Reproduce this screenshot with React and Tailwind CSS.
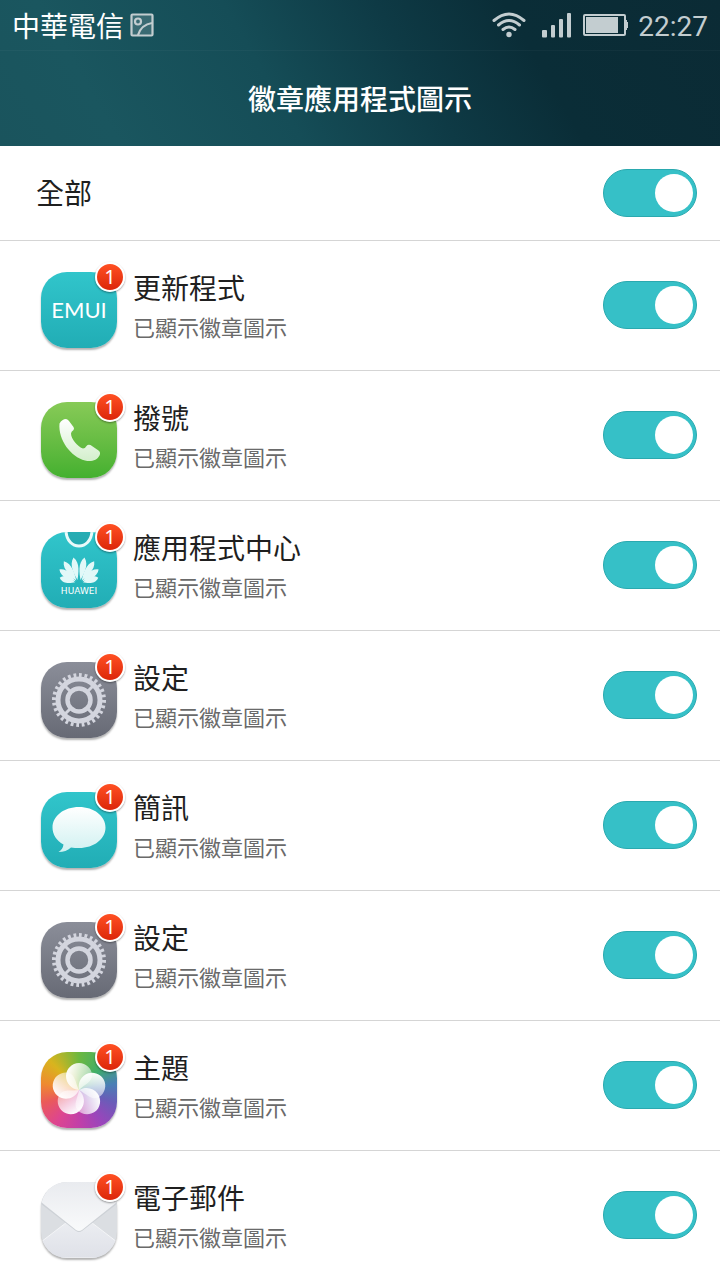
import React, { useState } from 'react'

const SUBTITLE = '已顯示徽章圖示'

function EmuiIcon() {
  return (
    <svg viewBox="0 0 76 76" className="w-full h-full">
      <text
        x="38"
        y="46"
        textAnchor="middle"
        fill="#fff"
        className="text-[22px] font-[Lato,sans-serif]"
      >
        EMUI
      </text>
    </svg>
  )
}

function PhoneIcon() {
  return (
    <svg viewBox="0 0 76 76" className="w-full h-full">
      <defs>
        <linearGradient id="phone" x1="0" y1="0" x2="0" y2="1">
          <stop offset="0" stopColor="#fff" />
          <stop offset="1" stopColor="#d3efcc" />
        </linearGradient>
      </defs>
      <path
        d="M18.5 21.5Q21 17 25 17Q27 17.500 28 19L32.500 25Q33.500 26.500 32.500 28Q30 29.500 30 31.500C30 37 37 45 42 46.500Q44 46.500 45.500 44Q47 42 49.500 43L57.500 48.500Q60 50.500 58.500 53.500C56 58.500 50 60 44 58.500C30 55 17 38 18.500 21.500Z"
        fill="url(#phone)"
      />
    </svg>
  )
}

const HUAWEI_PETALS = [
  { angle: 10, length: 26 },
  { angle: 33, length: 26 },
  { angle: 54, length: 23 },
  { angle: 74, length: 19 },
]

function StoreIcon() {
  return (
    <svg viewBox="0 0 76 76" className="w-full h-full">
      <path d="M25 0C26 20 50 20 51 0Z" fill="#1c939c" opacity="0.5" />
      <path d="M25 -1C26 19 50 19 51 -1" fill="none" stroke="#e9fafa" strokeWidth="3" />
      <g fill="#e2f8f8">
        {HUAWEI_PETALS.flatMap(({ angle, length }) =>
          [-1, 1].map((side) => (
            <path
              key={angle * side}
              d={`M0 -3C-2 ${-length * 0.35} -6 ${-length * 0.75} 0 ${-length}C6 ${-length * 0.75} 2 ${-length * 0.35} 0 -3Z`}
              transform={`translate(${38 + side} 51) rotate(${angle * side})`}
            />
          ))
        )}
      </g>
      <text
        x="38"
        y="62"
        textAnchor="middle"
        fill="#fff"
        className="text-[9px] font-['DejaVu_Sans',sans-serif]"
      >
        HUAWEI
      </text>
    </svg>
  )
}

function GearIcon() {
  return (
    <svg viewBox="0 0 76 76" className="w-full h-full">
      <g fill="none" stroke="#d3d5de">
        <circle cx="38" cy="38" r="25" strokeWidth="4" pathLength="56" strokeDasharray="1 1" />
        <circle cx="38" cy="38" r="21" strokeWidth="5" />
        <circle cx="38" cy="38" r="11.5" strokeWidth="4.500" />
        <path d="M24 24L30 30M52 24L46 30M24 52L30 46M52 52L46 46" strokeWidth="3" />
      </g>
    </svg>
  )
}

function MessageIcon() {
  return (
    <svg viewBox="0 0 76 76" className="w-full h-full">
      <defs>
        <linearGradient id="bubble" x1="0" y1="0" x2="0" y2="1">
          <stop offset="0" stopColor="#fff" />
          <stop offset="1" stopColor="#d0f1f1" />
        </linearGradient>
      </defs>
      <path
        d="M38 15C53 15 64.500 24 64.500 35.500C64.500 47 53 56 38 56Q34 56 30 55.500Q25 60 17.500 60Q22 57 22.500 52.500C15.500 48.500 11.500 42.500 11.500 35.500C11.500 24 23 15 38 15Z"
        fill="url(#bubble)"
      />
    </svg>
  )
}

function ThemeIcon() {
  return (
    <svg viewBox="0 0 76 76" className="w-full h-full">
      <defs>
        <linearGradient id="petal" x1="0" y1="0" x2="1" y2="0.4">
          <stop offset="0.2" stopColor="#fff" stopOpacity="0.95" />
          <stop offset="1" stopColor="#fff" stopOpacity="0.5" />
        </linearGradient>
      </defs>
      {[288, 216, 144, 72, 0].map((angle) => (
        <path
          key={angle}
          d="M0 0C-8 -1 -13 -7 -13 -14C-13 -21 -7 -27 0 -27C7 -27 13 -21 13 -15C13 -8 6 -6 0 0Z"
          fill="url(#petal)"
          transform={`translate(38 38) rotate(${angle})`}
        />
      ))}
    </svg>
  )
}

function MailIcon() {
  return (
    <svg viewBox="0 0 76 76" className="w-full h-full">
      <defs>
        <linearGradient id="flap" x1="0" y1="0" x2="0" y2="1">
          <stop offset="0" stopColor="#e9ebef" />
          <stop offset="1" stopColor="#f9fafb" />
        </linearGradient>
        <linearGradient id="pocket" x1="0" y1="0" x2="0" y2="1">
          <stop offset="0" stopColor="#eceef2" />
          <stop offset="1" stopColor="#dfe1e8" />
        </linearGradient>
      </defs>
      <path d="M0 60L30 37H46L76 60V76H0Z" fill="url(#pocket)" stroke="#f4f5f7" />
      <path d="M0 22L35 49Q38 51 41 49L76 22V10H0Z" fill="#cdd1d6" />
      <path d="M0 20L35 48Q38 50 41 48L76 20V0H0Z" fill="url(#flap)" />
    </svg>
  )
}

const TEAL = 'bg-linear-to-b from-[#31c5cb] to-[#21adb5]'
const GRAY = 'bg-linear-to-b from-[#8b8e99] to-[#676a75]'

const APPS = [
  { id: 'updater', name: '更新程式', Icon: EmuiIcon, tile: TEAL },
  { id: 'dialer', name: '撥號', Icon: PhoneIcon, tile: 'bg-linear-to-b from-[#87ca57] to-[#43b02f]' },
  { id: 'store', name: '應用程式中心', Icon: StoreIcon, tile: TEAL },
  { id: 'settings', name: '設定', Icon: GearIcon, tile: GRAY },
  { id: 'messages', name: '簡訊', Icon: MessageIcon, tile: TEAL },
  { id: 'settings-2', name: '設定', Icon: GearIcon, tile: GRAY },
  {
    id: 'themes',
    name: '主題',
    Icon: ThemeIcon,
    tile: 'bg-[conic-gradient(#6cb840,#3fae6a_45deg,#4a7fb5_80deg,#6a5cb8_110deg,#9a45bb_145deg,#c23fa8_180deg,#dd4590_215deg,#ea5a5a_250deg,#ee8a30_280deg,#d9b41e_315deg,#6cb840)]',
  },
  { id: 'email', name: '電子郵件', Icon: MailIcon, tile: 'bg-[#dbdee2]' },
]

function Toggle({ id, checked, onChange }) {
  return (
    <input
      id={id}
      type="checkbox"
      role="switch"
      checked={checked}
      onChange={onChange}
      className="appearance-none shrink-0 w-[94px] h-12 px-[3px] rounded-full border border-gray-400 bg-gray-300 checked:border-[#2aa9af] checked:bg-[#36c0c7] flex items-center checked:justify-end cursor-pointer before:block before:size-[38px] before:rounded-full before:bg-white"
    />
  )
}

function StatusBar() {
  return (
    <div className="h-[50px] pl-3 pr-3 flex items-center justify-between text-[#c3cdd0]">
      <div className="flex items-center gap-1.5">
        <span className="text-[28px] leading-10 text-white">中華電信</span>
        <svg viewBox="0 0 24 24" className="size-6" fill="none" stroke="currentColor" strokeWidth="2.200">
          <rect x="1.500" y="1.500" width="21" height="21" rx="1" fill="#fff" fillOpacity="0.15" />
          <circle cx="8" cy="8.500" r="3" />
          <path d="M8 22C10 16 15 11 22 10" />
        </svg>
      </div>
      <div className="flex items-center">
        <svg viewBox="0 0 34 26" className="w-[34px] h-[26px] mr-4" fill="none" stroke="currentColor" strokeWidth="3" strokeLinecap="round">
          <path d="M2 8.500Q17 -4.500 32 8.500M6.500 13Q17 4 27.500 13M11 17.500Q17 12.500 23 17.500" />
          <circle cx="17" cy="22.500" r="2.700" fill="currentColor" stroke="none" />
        </svg>
        <svg viewBox="0 0 30 26" className="w-[30px] h-[26px] mr-[11px]" fill="currentColor">
          <rect x="0" y="18" width="5" height="7.500" rx="1" />
          <rect x="9" y="13" width="4" height="12.500" rx="1" />
          <rect x="17" y="7" width="4" height="18.500" rx="1" />
          <rect x="25" y="1" width="4" height="24.500" rx="1" />
        </svg>
        <svg viewBox="0 0 45 22" className="w-[45px] h-[22px] mr-2.5" fill="currentColor">
          <rect x="1" y="1" width="41" height="20" rx="1" fill="none" stroke="currentColor" strokeWidth="2" />
          <rect x="3" y="3" width="32" height="16" />
          <path d="M42 6H44V8H45V14H44V16H42Z" />
        </svg>
        <span className="pt-1 text-[28px] leading-10 font-[Roboto,sans-serif]">22:27</span>
      </div>
    </div>
  )
}

function AppRow({ app, checked, onChange }) {
  const { Icon } = app
  return (
    <li className="h-[130px] pl-[41px] pr-[23px] pb-px flex items-center border-b border-[#d5d5d5] last:border-b-0 last:pb-0.5">
      <div className="relative size-[76px] mt-2.5 mr-4 shrink-0">
        <div className={`size-full rounded-[26px] overflow-hidden shadow-[0_2px_2px_rgba(0,0,0,0.3)] ${app.tile}`}>
          <Icon />
        </div>
        <span className="absolute -top-2.5 -right-2 size-[30px] rounded-full border-2 border-white bg-linear-to-b from-[#ff4f22] to-[#dc2509] shadow-[0_1px_2px_rgba(0,0,0,0.4)] flex items-center justify-center text-white text-xl leading-none font-['Noto_Sans',sans-serif]">
          1
        </span>
      </div>
      <label htmlFor={app.id} className="flex-1 pt-0.5 cursor-pointer">
        <span className="block text-[28px] leading-10 text-[#1f1f1f]">{app.name}</span>
        <span className="block text-[22px] leading-[38px] text-[#6a6a6a]">{SUBTITLE}</span>
      </label>
      <Toggle id={app.id} checked={checked} onChange={onChange} />
    </li>
  )
}

export default function App() {
  const [enabled, setEnabled] = useState(() =>
    Object.fromEntries(APPS.map((app) => [app.id, true]))
  )
  const allOn = APPS.every((app) => enabled[app.id])

  const toggleAll = () => {
    setEnabled(Object.fromEntries(APPS.map((app) => [app.id, !allOn])))
  }

  const toggleApp = (id) => {
    setEnabled((prev) => ({ ...prev, [id]: !prev[id] }))
  }

  return (
    <div className="bg-white font-['Noto_Sans_CJK_TC',sans-serif]">
      <header className="bg-[linear-gradient(60deg,#1a545d,#1a565f_15%,#154d57_38%,#0e3a45_57%,#0a2d37_73%,#0b2b35)]">
        <StatusBar />
        <h1 className="h-24 pb-0.5 flex items-center justify-center border-t border-white/3 text-[28px] font-medium text-white">
          徽章應用程式圖示
        </h1>
      </header>
      <main>
        <div className="h-[95px] pl-9 pr-[23px] flex items-center justify-between border-b border-[#d5d5d5]">
          <label htmlFor="all" className="text-[28px] leading-10 text-[#1f1f1f] pb-0.5 cursor-pointer">全部</label>
          <Toggle id="all" checked={allOn} onChange={toggleAll} />
        </div>
        <ul>
          {APPS.map((app) => (
            <AppRow
              key={app.id}
              app={app}
              checked={enabled[app.id]}
              onChange={() => toggleApp(app.id)}
            />
          ))}
        </ul>
      </main>
    </div>
  )
}
